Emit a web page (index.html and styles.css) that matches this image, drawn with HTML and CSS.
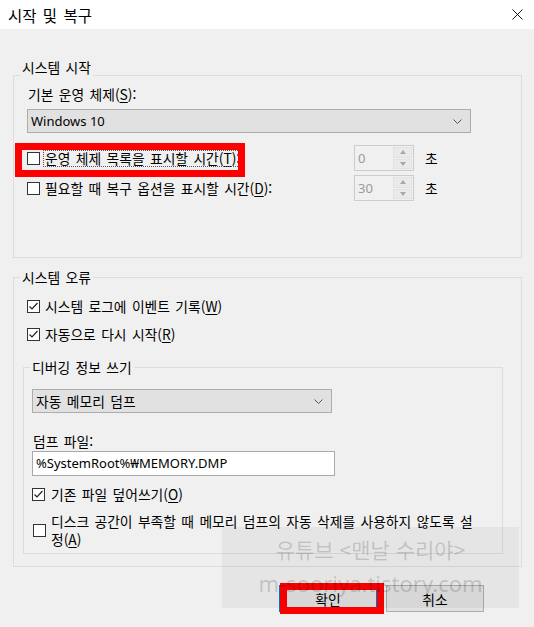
FILE: index.html
```html
<!DOCTYPE html>
<html lang="ko">
<head>
    <meta charset="UTF-8">
    <meta name="viewport" content="width=device-width, initial-scale=1.0">
    <title>시작 및 복구</title>
    <link rel="stylesheet" href="styles.css">
</head>
<body>
    <div class="window">
        <div class="titlebar">
            <span class="title">시작 및 복구</span>
            <svg class="close" viewBox="0 0 12 12"><path d="M0.5 0.5 L11.5 11.5 M11.5 0.5 L0.5 11.5" stroke="#000" stroke-width="1"/></svg>
        </div>

        <div class="content">
            <fieldset class="group startup">
                <legend>시스템 시작</legend>
                <div class="field-label">기본 운영 체제(<u>S</u>):</div>
                <div class="select os-select">
                    <span class="latin">Windows 10</span>
                    <svg class="chevron" viewBox="0 0 9 5"><path d="M0.5 0.5 L4.5 4.5 L8.5 0.5" fill="none" stroke="#555"/></svg>
                </div>

                <div class="time-row first">
                    <label class="check">
                        <svg class="box" viewBox="0 0 13 13"><rect x="0.5" y="0.5" width="12" height="12" fill="#fff" stroke="#333"/></svg>
                        <span class="focus">운영 체제 목록을 표시할 시간(<u>T</u>):</span>
                    </label>
                    <div class="spinner">
                        <span class="value">0</span>
                        <span class="arrows"><span class="up"></span><span class="down"></span></span>
                    </div>
                    <span class="unit">초</span>
                    <span class="mark"></span>
                </div>
                <div class="time-row">
                    <label class="check">
                        <svg class="box" viewBox="0 0 13 13"><rect x="0.5" y="0.5" width="12" height="12" fill="#fff" stroke="#333"/></svg>
                        <span>필요할 때 복구 옵션을 표시할 시간(<u>D</u>):</span>
                    </label>
                    <div class="spinner">
                        <span class="value">30</span>
                        <span class="arrows"><span class="up"></span><span class="down"></span></span>
                    </div>
                    <span class="unit">초</span>
                </div>
            </fieldset>

            <fieldset class="group errors">
                <legend>시스템 오류</legend>
                <label class="check log-row">
                    <svg class="box" viewBox="0 0 13 13"><rect x="0.5" y="0.5" width="12" height="12" fill="#fff" stroke="#333"/><path d="M2.5 6.5 L5 9 L10.5 3" fill="none" stroke="#222" stroke-width="1.2"/></svg>
                    <span>시스템 로그에 이벤트 기록(<u>W</u>)</span>
                </label>
                <label class="check restart-row">
                    <svg class="box" viewBox="0 0 13 13"><rect x="0.5" y="0.5" width="12" height="12" fill="#fff" stroke="#333"/><path d="M2.5 6.5 L5 9 L10.5 3" fill="none" stroke="#222" stroke-width="1.2"/></svg>
                    <span>자동으로 다시 시작(<u>R</u>)</span>
                </label>

                <fieldset class="group debug">
                    <legend>디버깅 정보 쓰기</legend>
                    <div class="select dump-select">
                        <span>자동 메모리 덤프</span>
                        <svg class="chevron" viewBox="0 0 9 5"><path d="M0.5 0.5 L4.5 4.5 L8.5 0.5" fill="none" stroke="#555"/></svg>
                    </div>
                    <div class="dump-label">덤프 파일:</div>
                    <div class="dump-input latin">%SystemRoot%₩MEMORY.DMP</div>
                    <label class="check overwrite-row">
                        <svg class="box" viewBox="0 0 13 13"><rect x="0.5" y="0.5" width="12" height="12" fill="#fff" stroke="#333"/><path d="M2.5 6.5 L5 9 L10.5 3" fill="none" stroke="#222" stroke-width="1.2"/></svg>
                        <span>기존 파일 덮어쓰기(<u>O</u>)</span>
                    </label>
                    <label class="check space-row">
                        <svg class="box" viewBox="0 0 13 13"><rect x="0.5" y="0.5" width="12" height="12" fill="#fff" stroke="#333"/></svg>
                        <span class="wrap">디스크 공간이 부족할 때 메모리 덤프의 자동 삭제를 사용하지 않도록 설정(<u>A</u>)</span>
                    </label>
                </fieldset>
            </fieldset>

            <div class="actions">
                <div class="ok-wrap">
                    <button class="btn ok">확인</button>
                    <span class="mark"></span>
                </div>
                <button class="btn">취소</button>
            </div>
        </div>

        <div class="watermark">
            <div class="wm-name">유튜브 &lt;맨날 수리야&gt;</div>
            <div class="wm-site">m-sooriya.tistory.com</div>
        </div>
    </div>
</body>
</html>
```

FILE: styles.css
```css
body {
    margin: 0;
    background: #f0f0f0;
    font-family: "Noto Sans CJK KR", "Noto Sans", sans-serif;
    font-size: 13.8px;
    color: #000;
    word-spacing: 1.5px;
}
.window {
    position: relative;
    width: 534px;
    height: 627px;
    overflow: hidden;
}
.titlebar {
    height: 29px;
    background: #fff;
    display: flex;
    align-items: center;
    justify-content: space-between;
    padding: 0 11px 0 8px;
    box-sizing: border-box;
}
.title {
    font-size: 15.5px;
    word-spacing: 2px;
}
.close {
    width: 11px;
    height: 11px;
}
.latin {
    font-family: "Noto Sans", "Noto Sans CJK KR", sans-serif;
    font-size: 13px;
    word-spacing: 0;
}
u {
    text-decoration-thickness: 1px;
    text-underline-offset: 2px;
}

.content {
    padding: 29px 0 0 13px;
}
.group {
    margin: 0;
    width: 509px;
    min-width: 0;
    box-sizing: border-box;
    border: 1px solid #dcdcdc;
    padding: 0 13px;
}
.group legend {
    padding: 0 2px;
    margin-left: -7px;
    line-height: 18px;
}
.startup {
    padding-bottom: 56px;
}
/* the first caption sits above its frame line */
.startup legend {
    padding-bottom: 16px;
}
.errors {
    margin-top: 10px;
}
.field-label {
    margin-top: -7px;
    line-height: 18px;
    padding-left: 1px;
}
.select {
    height: 24px;
    box-sizing: border-box;
    border: 1px solid #adadad;
    background: #e1e1e1;
    display: flex;
    align-items: center;
    justify-content: space-between;
    padding: 0 8px 0 3px;
}
.chevron {
    width: 9px;
    height: 5px;
}
.os-select {
    margin-top: 6px;
    width: 444px;
}

.check {
    display: flex;
    align-items: center;
    gap: 5px;
    line-height: 18px;
}
.box {
    width: 13px;
    height: 13px;
    flex: none;
}
.time-row {
    position: relative;
    display: flex;
    align-items: center;
    height: 26px;
}
.time-row.first {
    margin-top: 12px;
}
.time-row + .time-row {
    margin-top: 4px;
}
.time-row .check {
    width: 327px;
    flex: none;
}
.time-row.first .check {
    gap: 4px;
}
.focus {
    line-height: 15px;
    padding: 0 1px;
    outline: 1px dotted #555;
}
.spinner {
    width: 60px;
    height: 26px;
    box-sizing: border-box;
    border: 1px solid #cccccc;
    background: #f0f0f0;
    display: flex;
}
.value {
    flex: 1;
    padding-left: 3px;
    line-height: 24px;
    color: #9a9a9a;
    font-family: "Noto Sans", sans-serif;
    font-size: 13px;
}
.arrows {
    width: 19px;
    display: flex;
    flex-direction: column;
    gap: 1px;
    padding: 1px 1px 1px 0;
}
.arrows span {
    flex: 1;
    border: 1px solid #e2e2e2;
    background: #eaeaea;
    display: flex;
    align-items: center;
    justify-content: center;
}
.arrows .up::after {
    content: "";
    border-left: 3.5px solid transparent;
    border-right: 3.5px solid transparent;
    border-bottom: 4px solid #a8a8a8;
}
.arrows .down::after {
    content: "";
    border-left: 3.5px solid transparent;
    border-right: 3.5px solid transparent;
    border-top: 4px solid #a8a8a8;
}
.unit {
    margin-left: 11px;
}
.mark {
    position: absolute;
    box-sizing: border-box;
    border: 7px solid #ff0000;
    pointer-events: none;
}
.time-row .mark {
    left: -12px;
    top: -2px;
    width: 230px;
    height: 34px;
}

.log-row {
    margin-top: 11px;
}
.restart-row {
    margin-top: 10px;
}
.debug {
    margin: 15px 0 12px -4px;
    width: 480px;
    padding: 0 8px 5px;
}
.debug legend {
    margin-left: -2px;
}
.dump-select {
    margin-top: 13px;
    width: 300px;
}
.dump-label {
    margin-top: 19px;
    line-height: 18px;
    padding-left: 1px;
}
.dump-input {
    margin-top: 1px;
    width: 303px;
    height: 25px;
    box-sizing: border-box;
    border: 1px solid #a9a9a9;
    background: #fff;
    padding-left: 3px;
    line-height: 23px;
}
.overwrite-row {
    margin-top: 9px;
    gap: 6px;
}
.space-row {
    margin-top: 9px;
    gap: 5px;
    padding-left: 1px;
}
.wrap {
    max-width: 428px;
    line-height: 18px;
}

.actions {
    display: flex;
    justify-content: flex-end;
    gap: 9px;
    margin-top: 18px;
    padding-right: 50px;
}
.btn {
    width: 98px;
    height: 27px;
    box-sizing: border-box;
    border: 1px solid #adadad;
    background: #e1e1e1;
    font: inherit;
    padding: 0;
    color: #000;
}
.btn.ok {
    border-color: #0078d7;
}
.ok-wrap {
    position: relative;
    display: flex;
}
.ok-wrap .mark {
    left: 1px;
    top: -2px;
    width: 104px;
    height: 31px;
}

.watermark {
    position: absolute;
    left: 222px;
    top: 527px;
    width: 297px;
    height: 81px;
    background: rgba(0, 0, 0, 0.045);
    text-align: center;
    color: rgba(0, 0, 0, 0.17);
    padding-top: 7px;
    box-sizing: border-box;
    font-family: "Noto Sans", "Noto Sans CJK KR", sans-serif;
    font-size: 22px;
    line-height: 30px;
    word-spacing: 0;
}
.wm-name {
    font-family: "Noto Sans CJK KR", sans-serif;
    font-size: 21px;
}
.wm-site {
    margin-top: 4px;
}
```
